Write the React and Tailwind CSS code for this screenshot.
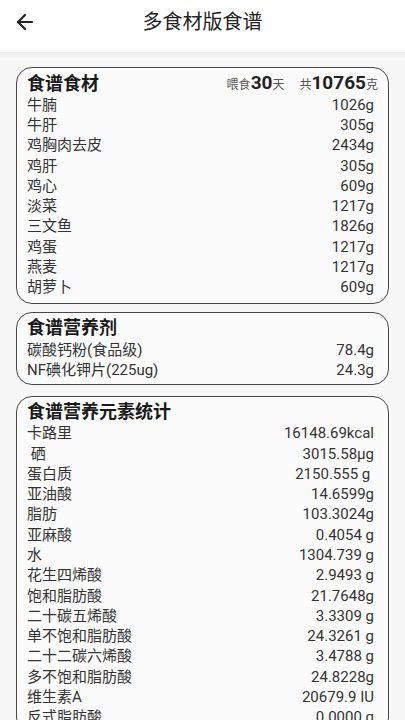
import React from 'react';
import { ArrowLeft } from 'lucide-react';

const font = { fontFamily: "Roboto, 'Noto Sans CJK SC', sans-serif" };

const ingredients = [
  ['牛腩', '1026g'],
  ['牛肝', '305g'],
  ['鸡胸肉去皮', '2434g'],
  ['鸡肝', '305g'],
  ['鸡心', '609g'],
  ['淡菜', '1217g'],
  ['三文鱼', '1826g'],
  ['鸡蛋', '1217g'],
  ['燕麦', '1217g'],
  ['胡萝卜', '609g'],
];

const supplements = [
  ['碳酸钙粉(食品级)', '78.4g'],
  ['NF碘化钾片(225ug)', '24.3g'],
];

const nutrients = [
  ['卡路里', '16148.69kcal'],
  ['\u00a0硒', '3015.58μg'],
  ['蛋白质', '2150.555 g\u00a0'],
  ['亚油酸', '14.6599g'],
  ['脂肪', '103.3024g'],
  ['亚麻酸', '0.4054 g'],
  ['水', '1304.739 g'],
  ['花生四烯酸', '2.9493 g'],
  ['饱和脂肪酸', '21.7648g'],
  ['二十碳五烯酸', '3.3309 g'],
  ['单不饱和脂肪酸', '24.3261 g'],
  ['二十二碳六烯酸', '3.4788 g'],
  ['多不饱和脂肪酸', '24.8228g'],
  ['维生素A', '20679.9 IU'],
  ['反式脂肪酸', '0.0000 g'],
];

const Row = ({ name, value }) => (
  <div className="flex h-[20.3px] items-center justify-between text-[15px] leading-none text-[#333]">
    <span className="whitespace-pre">{name}</span>
    <span className="whitespace-pre">{value}</span>
  </div>
);

const Section = ({ title, extra, rows, bottom = 'pb-[5px]' }) => (
  <div className={`mx-4 rounded-[16px] border-[1.5px] border-[#474747] bg-[#fbfbfb] pl-[10px] pr-[14px] pt-[4px] ${bottom}`}>
    <div className="flex h-[23px] items-center justify-between">
      <span className="text-[18px] font-bold leading-none text-[#1a1a1a]">{title}</span>
      {extra}
    </div>
    {rows.map(([name, value]) => (
      <Row key={name} name={name} value={value} />
    ))}
  </div>
);

export default function App() {
  return (
    <div className="h-[720px] overflow-hidden bg-[#f7f7f7]" style={font}>
      <div className="h-[52px] bg-white">
        <div className="relative flex h-[44px] items-center justify-center">
          <ArrowLeft className="absolute left-[13px] top-[10px] h-[24px] w-[24px] text-[#222]" strokeWidth={2.2} />
          <span className="text-[20px] text-[#222]">多食材版食谱</span>
        </div>
      </div>
      <div className="h-[6px] bg-gradient-to-b from-[#ececec] to-[#f7f7f7]" />

      <div className="flex flex-col pt-[9px]">
        <Section
          title="食谱食材"
          rows={ingredients}
          extra={
            <div className="-mr-[4px] flex items-baseline text-[#555]">
              <span className="text-[12px]">喂食</span>
              <span className="text-[19px] font-bold text-[#222]">30</span>
              <span className="text-[12px]">天</span>
              <span className="ml-[15px] text-[12px]">共</span>
              <span className="text-[19px] font-bold text-[#222]">10765</span>
              <span className="text-[12px]">克</span>
            </div>
          }
        />
        <div className="pt-[8px]">
          <Section title="食谱营养剂" rows={supplements} bottom="pb-[3px]" />
        </div>
        <div className="pt-[11px]">
          <Section title="食谱营养元素统计" rows={nutrients} />
        </div>
      </div>
    </div>
  );
}
